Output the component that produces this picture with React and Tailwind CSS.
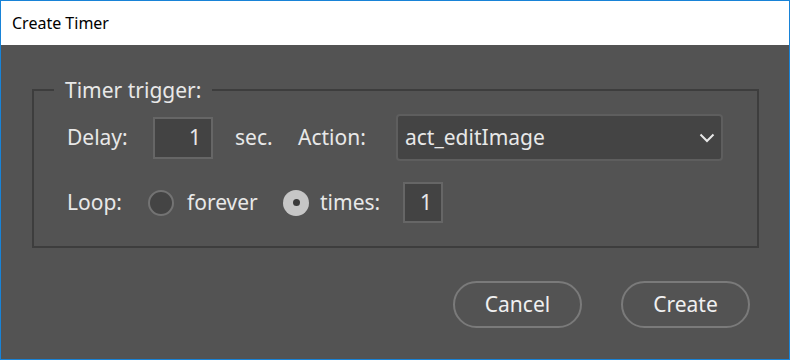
import React from "react";

function Radio({ checked }) {
  return checked ? (
    <div className="w-[26px] h-[26px] rounded-full bg-[#c6c6c6] flex items-center justify-center shrink-0">
      <div className="w-[7px] h-[7px] rounded-full bg-[#3a3a3a]" />
    </div>
  ) : (
    <div className="w-[26px] h-[26px] rounded-full bg-[#444444] border-2 border-[#737373] shrink-0" />
  );
}

export default function App() {
  return (
    <div className="w-[790px] h-[360px] border border-[#1883d7] flex flex-col overflow-hidden font-['Noto_Sans',sans-serif]">
      <div className="h-[44px] bg-white flex items-center pl-[11px] text-[16px] text-black">
        Create Timer
      </div>
      <div className="flex-1 bg-[#535353] text-[#e8e8e8] text-[21px] flex flex-col pl-[31px]">
        <fieldset className="mt-[33px] w-[727px] h-[170px] border-2 border-[#3d3d3d] m-0 p-0">
          <legend className="ml-[20px] px-[11px] leading-[24px]">Timer trigger:</legend>
          <div className="flex items-center h-[47px] mt-[12px] pl-[33px]">
            <span className="w-[86px]">Delay:</span>
            <div className="w-[60px] h-[42px] bg-[#434343] border-2 border-[#666666] flex items-center justify-end pr-[10px]">
              1
            </div>
            <span className="ml-[22px] w-[63px]">sec.</span>
            <span className="w-[98px]">Action:</span>
            <div className="w-[327px] h-[47px] rounded-[4px] bg-[#444444] border-2 border-[#5e5e5e] flex items-center justify-between pl-[7px] pr-[6px]">
              <span>act_editImage</span>
              <svg width="16" height="10" viewBox="0 0 16 10" fill="none">
                <path d="M1.5 1.5 L8 8 L14.5 1.5" stroke="#e8e8e8" strokeWidth="2" />
              </svg>
            </div>
          </div>
          <div className="flex items-center h-[41px] mt-[21px] pl-[33px]">
            <span className="w-[81px]">Loop:</span>
            <Radio checked={false} />
            <span className="ml-[13px] w-[96px]">forever</span>
            <Radio checked={true} />
            <span className="ml-[11px] w-[83px]">times:</span>
            <div className="w-[40px] h-[41px] bg-[#434343] border-2 border-[#666666] flex items-center justify-end pr-[9px]">
              1
            </div>
          </div>
        </fieldset>
        <div className="flex justify-end gap-[39px] mt-[33px] pr-[39px]">
          <button className="w-[129px] h-[47px] rounded-full border-2 border-[#7a7a7a] text-[#f0f0f0] text-[21px]">
            Cancel
          </button>
          <button className="w-[129px] h-[47px] rounded-full border-2 border-[#7a7a7a] text-[#f0f0f0] text-[21px]">
            Create
          </button>
        </div>
      </div>
    </div>
  );
}
